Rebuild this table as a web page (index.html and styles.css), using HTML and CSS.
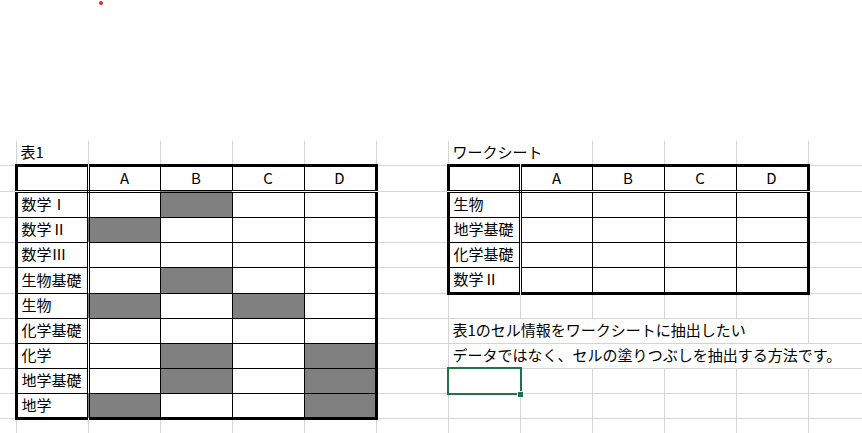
FILE: index.html
```html
<!DOCTYPE html>
<html lang="ja">
<head>
<meta charset="utf-8">
<title>Sheet</title>
<link rel="stylesheet" href="styles.css">
</head>
<body>
<div class="top"><span class="dot"></span></div>
<table class="sheet">
<colgroup>
<col class="c0"><col class="cw"><col class="cw"><col class="cw"><col class="cw"><col class="cw"><col class="cw"><col class="cw"><col class="cw"><col class="cw"><col class="cw"><col class="cw"><col class="cw">
</colgroup>
<tr class="r0">
<td class="e"></td><td>表1</td><td></td><td></td><td></td><td></td><td></td><td colspan="2">ワークシート</td><td></td><td></td><td></td><td></td>
</tr>
<tr class="r1">
<td class="e"></td>
<td class="t tt tl hd lb"></td><td class="t tt hd ctr">A</td><td class="t tt hd ctr">B</td><td class="t tt hd ctr">C</td><td class="t tt hd tr ctr">D</td>
<td></td>
<td class="t tt tl hd lb"></td><td class="t tt hd ctr">A</td><td class="t tt hd ctr">B</td><td class="t tt hd ctr">C</td><td class="t tt hd tr ctr">D</td>
<td></td>
</tr>
<tr class="r2">
<td class="e"></td>
<td class="t tl lb">数学Ⅰ</td><td class="t"></td><td class="t f"></td><td class="t"></td><td class="t tr"></td>
<td></td>
<td class="t tl lb">生物</td><td class="t"></td><td class="t"></td><td class="t"></td><td class="t tr"></td>
<td></td>
</tr>
<tr class="r3">
<td class="e"></td>
<td class="t tl lb">数学Ⅱ</td><td class="t f"></td><td class="t"></td><td class="t"></td><td class="t tr"></td>
<td></td>
<td class="t tl lb">地学基礎</td><td class="t"></td><td class="t"></td><td class="t"></td><td class="t tr"></td>
<td></td>
</tr>
<tr class="r4">
<td class="e"></td>
<td class="t tl lb">数学Ⅲ</td><td class="t"></td><td class="t"></td><td class="t"></td><td class="t tr"></td>
<td></td>
<td class="t tl lb">化学基礎</td><td class="t"></td><td class="t"></td><td class="t"></td><td class="t tr"></td>
<td></td>
</tr>
<tr class="r5">
<td class="e"></td>
<td class="t tl lb">生物基礎</td><td class="t"></td><td class="t f"></td><td class="t"></td><td class="t tr"></td>
<td></td>
<td class="t tl lb tb">数学Ⅱ</td><td class="t tb"></td><td class="t tb"></td><td class="t tb"></td><td class="t tr tb"></td>
<td></td>
</tr>
<tr class="r6">
<td class="e"></td>
<td class="t tl lb">生物</td><td class="t f"></td><td class="t"></td><td class="t f"></td><td class="t tr"></td>
<td></td><td></td><td></td><td></td><td></td><td></td><td></td>
</tr>
<tr class="r7">
<td class="e"></td>
<td class="t tl lb">化学基礎</td><td class="t"></td><td class="t"></td><td class="t"></td><td class="t tr"></td>
<td></td>
<td colspan="5">表1のセル情報をワークシートに抽出したい</td>
<td></td>
</tr>
<tr class="r8">
<td class="e"></td>
<td class="t tl lb">化学</td><td class="t"></td><td class="t f"></td><td class="t"></td><td class="t tr f"></td>
<td></td>
<td colspan="6">データではなく、セルの塗りつぶしを抽出する方法です。</td>
</tr>
<tr class="r9">
<td class="e"></td>
<td class="t tl lb">地学基礎</td><td class="t"></td><td class="t f"></td><td class="t"></td><td class="t tr f"></td>
<td></td>
<td class="sel"><span class="handle"></span></td><td></td><td></td><td></td><td></td><td></td>
</tr>
<tr class="r10">
<td class="e"></td>
<td class="t tl lb tb">地学</td><td class="t tb f"></td><td class="t tb"></td><td class="t tb"></td><td class="t tr tb f"></td>
<td></td><td></td><td></td><td></td><td></td><td></td><td></td>
</tr>
<tr class="r11">
<td class="e"></td><td></td><td></td><td></td><td></td><td></td><td></td><td></td><td></td><td></td><td></td><td></td><td></td>
</tr>
</table>
</body>
</html>
```
FILE: styles.css
```css
html, body {
  margin: 0;
  padding: 0;
  background: #ffffff;
  overflow: hidden;
}

body {
  width: 862px;
  height: 433px;
  font-family: "Noto Sans CJK JP", "Noto Sans", sans-serif;
  font-size: 15px;
  color: #000000;
}

.top {
  height: 140px;
}

.dot {
  display: block;
  width: 4px;
  height: 4px;
  margin: 1px 0 0 99px;
  border-radius: 50%;
  background: #e3262b;
}

.sheet {
  border-collapse: collapse;
  table-layout: fixed;
  width: 882px;
  margin-left: -2px;
}

.c0 { width: 18px; }
.cw { width: 72px; }

.sheet td {
  border: 1px solid #d4d4d4;
  padding: 0 3px 2px 4px;
  white-space: nowrap;
  overflow: visible;
  vertical-align: middle;
  line-height: 1;
  background: #ffffff;
}

.sheet td.e { border-left: none; }
.r0 td { border-top: none; }

.r0 { height: 24px; }
.r1 { height: 26px; }
.r2 { height: 26px; }
.r3 { height: 25px; }
.r4 { height: 25px; }
.r5 { height: 26px; }
.r6 { height: 25px; }
.r7 { height: 25px; }
.r8 { height: 25px; }
.r9 { height: 25px; }
.r10 { height: 25px; }
.r11 { height: 20px; }

.sheet td.t { border: 1px solid #000000; }
.sheet td.tt { border-top: 3px solid #000000; }
.sheet td.tb { border-bottom: 3px solid #000000; }
.sheet td.tl { border-left: 3px solid #000000; }
.sheet td.tr { border-right: 3px solid #000000; }
.sheet td.hd { border-bottom: 3px double #000000; }
.sheet td.lb { border-right: 3px double #000000; }

.sheet td.f { background: #808080; }
.sheet td.ctr { text-align: center; padding: 0 0 2px 0; }

.sheet td.sel {
  position: relative;
}

.sel::before {
  content: "";
  position: absolute;
  left: -2px;
  top: -2px;
  right: -2px;
  bottom: -2px;
  border: 2px solid #217346;
}

.handle {
  position: absolute;
  right: -4px;
  bottom: -5px;
  width: 5px;
  height: 5px;
  background: #217346;
  border: 1px solid #ffffff;
  z-index: 2;
}
```
